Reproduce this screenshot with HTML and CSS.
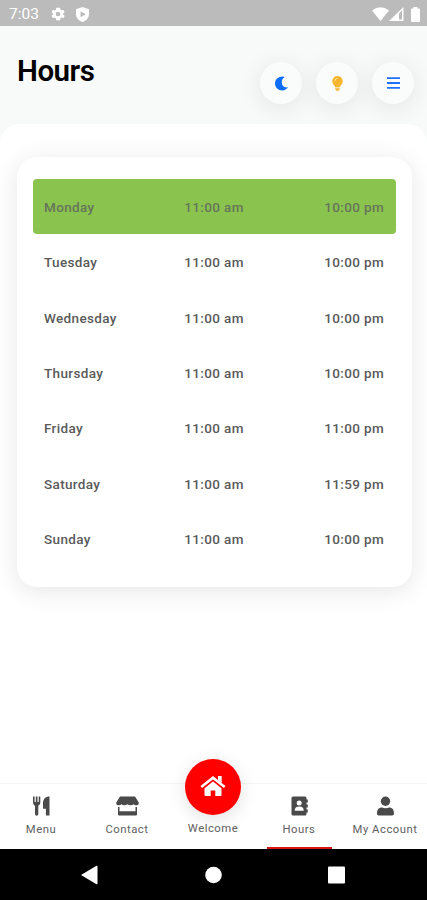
FILE: index.html
```html
<!DOCTYPE html>
<html lang="en">
<head>
    <meta charset="UTF-8">
    <meta name="viewport" content="width=device-width, initial-scale=1.0">
    <title>Hours</title>
    <link rel="stylesheet" href="styles.css">
</head>
<body>
    <div class="status-bar">
        <span class="clock">7:03</span>
        <svg class="gear" width="14" height="14" viewBox="2 2 20 20" fill="#fff"><path d="M19.4 13a7.500 7.500 0 0 0 0-2l2.100-1.600-2-3.500-2.500 1a7.500 7.500 0 0 0-1.700-1L15 3h-5.500l-.6 2.900a7.500 7.500 0 0 0-1.700 1l-2.500-1-2 3.500L4.700 11a7.500 7.500 0 0 0 0 2l-2 1.600 2 3.500 2.500-1a7.500 7.500 0 0 0 1.700 1l.6 2.900H15l.4-2.900a7.500 7.500 0 0 0 1.700-1l2.500 1 2-3.500zM12 8.700a3.300 3.300 0 1 1 0 6.600 3.300 3.300 0 0 1 0-6.600z"/></svg>
        <svg class="shield" width="13" height="15" viewBox="0 0 13 15" fill="#fff" fill-rule="evenodd"><path d="M6.500 0 13 2.300V7c0 3.700-2.700 6.800-6.500 8C2.700 13.800 0 10.700 0 7V2.300zM4.600 4.300v6L9.700 7.300z"/></svg>
        <div class="signals">
            <svg width="17" height="14" viewBox="0 0 17 14" fill="#fff"><path d="M0 3.500Q8.500-3 17 3.500L8.500 14z"/></svg>
            <svg width="15" height="14" viewBox="0 0 15 14"><path d="M0 14 14.500 0v14z" fill="#fff"/><path d="M10 6.300 13 3.300v9.200h-3z" fill="#bbb"/></svg>
            <svg class="battery" width="9" height="15" viewBox="0 0 9 15" fill="#fff"><path d="M2.500 0h4v1.500H8a1 1 0 0 1 1 1V14a1 1 0 0 1-1 1H1a1 1 0 0 1-1-1V2.500a1 1 0 0 1 1-1h1.500z"/></svg>
        </div>
    </div>

    <header class="header">
        <h1>Hours</h1>
        <div class="header-buttons">
            <div class="round-button">
                <svg width="13" height="15" viewBox="0 0 13 15" fill="#0d6efd"><path d="M8 .5C3.400.3 0 3.500 0 7.500s3.300 7 7.200 7c2.400 0 4.600-1.200 5.800-3.200-3.800.7-6.200-1.500-6.200-4.800C6.800 4 7.500 2.500 9.300 1.500 9.800 1.100 9.200.6 8 .5z"/></svg>
            </div>
            <div class="round-button">
                <svg width="11" height="15" viewBox="0 0 11 15"><path d="M5.500 0a5.200 5.200 0 0 0-4 8.500L3.200 11h4.600l1.700-2.500A5.200 5.200 0 0 0 5.500 0z" fill="#f6b52e"/><path d="M3.300 11.400h4.400v1.800L6.600 15H4.400l-1.100-1.800z" fill="#f8c256"/><path d="M2.800 5.200a2.700 2.700 0 0 1 2.700-2.700" stroke="#fce3a8" stroke-width=".9" fill="none"/></svg>
            </div>
            <div class="round-button">
                <svg width="13" height="12" viewBox="0 0 13 12" stroke="#1c70fa" stroke-width="1.800"><path d="M0 1.200h13M0 6h13M0 10.800h13"/></svg>
            </div>
        </div>
    </header>

    <main class="content">
        <div class="card">
            <div class="row today"><span>Monday</span><span>11:00 am</span><span>10:00 pm</span></div>
            <div class="row"><span>Tuesday</span><span>11:00 am</span><span>10:00 pm</span></div>
            <div class="row"><span>Wednesday</span><span>11:00 am</span><span>10:00 pm</span></div>
            <div class="row"><span>Thursday</span><span>11:00 am</span><span>10:00 pm</span></div>
            <div class="row"><span>Friday</span><span>11:00 am</span><span>11:00 pm</span></div>
            <div class="row"><span>Saturday</span><span>11:00 am</span><span>11:59 pm</span></div>
            <div class="row"><span>Sunday</span><span>11:00 am</span><span>10:00 pm</span></div>
        </div>
    </main>

    <nav class="tabs">
        <div class="tab">
            <svg width="17" height="20" viewBox="0 0 17 20" fill="#4a4a4a"><path d="M0 .5h1.600V6h1.200V.5h1.700V6h1.200V.5h1.600V6c0 2-.8 3.100-2 3.700V18a1.600 1.600 0 0 1-3.300 0V9.700C.8 9.100 0 8 0 6zM16.500.5V19.500h-3.600v-6.700H10V7c0-3.800 2.500-6.500 6.500-6.500z"/></svg>
            <span>Menu</span>
        </div>
        <div class="tab">
            <svg width="23" height="20" viewBox="0 0 23 20" fill="#4a4a4a"><path d="M4 .5h15l3.500 5.500c.8 2-.4 3.300-2.200 3.300-1.200 0-2-.4-2.600-1-.8.700-1.800 1-3 1-1.300 0-2.400-.3-3.200-1-.8.700-1.900 1-3.200 1-1.200 0-2.200-.3-3-1-.6.600-1.400 1-2.600 1C.9 9.300-.3 8 .5 6zM2 11h1.500v4.300h16V11H21v7.500a1 1 0 0 1-1 1H3a1 1 0 0 1-1-1z"/></svg>
            <span>Contact</span>
        </div>
        <div class="tab welcome">
            <div class="home-button">
                <svg width="26" height="20" viewBox="0 0 26 20"><path d="m1.300 11 11.700-9.300L24.700 11" fill="none" stroke="#fff" stroke-width="2.600"/><path d="M18 0h3.700v7L18 4zM13 5.500l8.500 6.700V19a1 1 0 0 1-1 1H15.300v-5.500h-4.600V20H5.500a1 1 0 0 1-1-1v-6.800z" fill="#fff"/></svg>
            </div>
            <span>Welcome</span>
        </div>
        <div class="tab active">
            <svg width="17" height="20" viewBox="0 0 17 20"><path d="M2 .5h12a1.500 1.500 0 0 1 1.500 1.500v1.500h1.300v3h-1.300v2h1.300v3h-1.300v2h1.300v3h-1.300V18a1.500 1.500 0 0 1-1.500 1.500H2A1.500 1.500 0 0 1 .5 18V2A1.500 1.500 0 0 1 2 .5z" fill="#4a4a4a"/><circle cx="8.200" cy="7" r="2.500" fill="#fff"/><path d="M3.700 14.800c0-3 1.500-4.300 4.500-4.300s4.500 1.300 4.500 4.300z" fill="#fff"/></svg>
            <span>Hours</span>
        </div>
        <div class="tab">
            <svg width="17" height="20" viewBox="0 0 17 20" fill="#4a4a4a"><circle cx="8.500" cy="5.200" r="4.700"/><path d="M0 17.500c0-4 1.800-6 5-6q3.500 1.300 7 0c3.200 0 5 2 5 6 0 1.200-.6 2-1.700 2H1.700C.6 19.500 0 18.700 0 17.500z"/></svg>
            <span>My Account</span>
        </div>
    </nav>

    <div class="system-bar">
        <svg width="17" height="20" viewBox="0 0 17 20" fill="#fff"><path d="M0 10 15.500.8Q16.500.5 16.500 1.500v17q0 1-1 .7z"/></svg>
        <svg width="17" height="18" viewBox="0 0 17 18" fill="#fff"><circle cx="8.500" cy="9" r="8.300"/></svg>
        <svg width="17" height="18" viewBox="0 0 17 18" fill="#fff"><rect y=".5" width="17" height="17" rx="1"/></svg>
    </div>
</body>
</html>
```

FILE: styles.css
```css
* {
    box-sizing: border-box;
}
body {
    display: flex;
    flex-direction: column;
    height: 900px;
    margin: 0;
    font-family: Roboto, sans-serif;
    background: #f8faf9;
    overflow: hidden;
}
svg {
    display: block;
    flex: none;
}

.status-bar {
    display: flex;
    align-items: center;
    height: 26px;
    flex: none;
    padding: 2px 7px 0 9px;
    background: #bbb;
    color: #fff;
}
.clock {
    width: 42px;
    font-size: 15.5px;
}
.shield {
    margin-left: 11px;
}
.signals {
    display: flex;
    align-items: center;
    margin-left: auto;
}
.battery {
    margin-left: 7px;
}

.header {
    display: flex;
    justify-content: space-between;
    height: 98px;
    flex: none;
    padding: 0 13px 0 17px;
}
.header h1 {
    margin: 28px 0 0;
    font-size: 29.5px;
    line-height: 34px;
    font-weight: 600;
    letter-spacing: -0.5px;
    color: #000;
}
.header-buttons {
    display: flex;
    gap: 14px;
    margin-top: 36px;
}
.round-button {
    display: flex;
    align-items: center;
    justify-content: center;
    width: 42px;
    height: 42px;
    border-radius: 50%;
    background: #fafcfb;
    box-shadow: 0 4px 24px rgba(0, 0, 0, 0.09);
}

.content {
    position: relative;
    flex: 1;
    padding: 33px 15px 0 17px;
    border-radius: 20px 20px 0 0;
    background: #fff;
}
.card {
    height: 430px;
    padding: 21.5px 16px;
    border-radius: 20px;
    background: #fff;
    box-shadow: 0 4px 24px rgba(0, 0, 0, 0.1);
}
.row {
    display: grid;
    grid-template-columns: 140.3px 140px auto;
    align-items: center;
    height: 55.3px;
    padding: 2px 0 0 11px;
    border-radius: 4px;
    font-size: 13.5px;
    font-weight: 500;
    letter-spacing: 0.35px;
    color: #5a5a5a;
}
.today {
    background: #8bc34f;
    color: #66755a;
}

.tabs {
    position: relative;
    display: flex;
    height: 66px;
    flex: none;
    margin: 0 -1px 0 -2px;
    border-top: 1px solid #f5f5f5;
    background: #fff;
}
.tab {
    display: flex;
    flex-direction: column;
    align-items: center;
    flex: 1 0 0;
    min-width: 0;
    padding-top: 12px;
    font-size: 11.3px;
    letter-spacing: 0.5px;
    line-height: 14px;
    white-space: nowrap;
    color: #606060;
}
.tab span {
    margin-top: 7px;
}
.welcome {
    padding-top: 0;
}
.home-button {
    display: flex;
    align-items: center;
    justify-content: center;
    width: 56px;
    height: 56px;
    margin-top: -25px;
    padding-bottom: 2px;
    border-radius: 50%;
    background: #f00;
    box-shadow: 0 4px 18px rgba(0, 0, 0, 0.12);
}
.active {
    background: linear-gradient(#d81515, #d81515) center bottom / 65px 2px no-repeat;
}

.system-bar {
    display: flex;
    align-items: center;
    justify-content: space-between;
    height: 51px;
    flex: none;
    padding: 0 82px 0 81px;
    background: #000;
}
```
